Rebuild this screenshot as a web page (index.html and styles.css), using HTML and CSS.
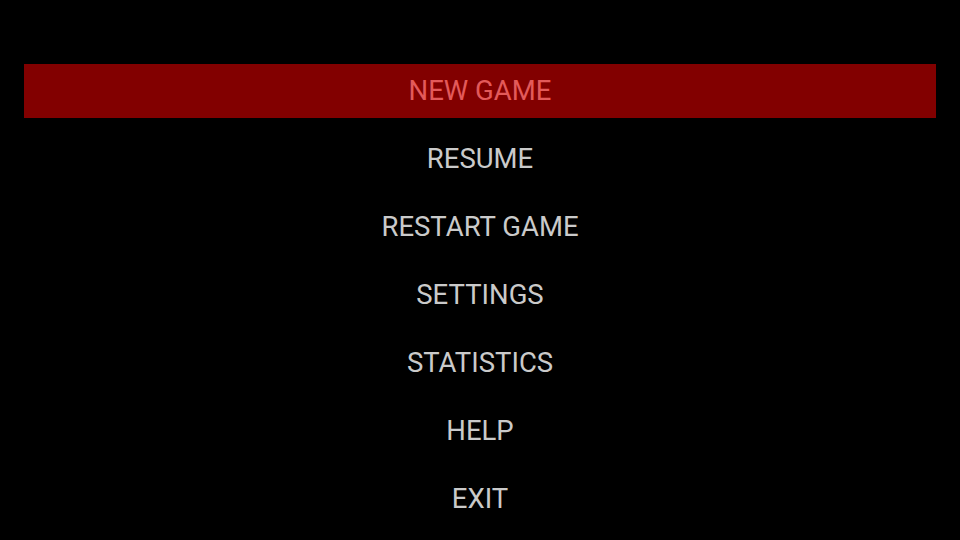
FILE: index.html
```html
<!DOCTYPE html>
<html lang="en">
<head>
    <meta charset="UTF-8">
    <title>Menu</title>
    <link rel="stylesheet" href="styles.css">
</head>
<body>
    <ul class="menu">
        <li class="menu-item active">NEW GAME</li>
        <li class="menu-item">RESUME</li>
        <li class="menu-item">RESTART GAME</li>
        <li class="menu-item">SETTINGS</li>
        <li class="menu-item">STATISTICS</li>
        <li class="menu-item">HELP</li>
        <li class="menu-item">EXIT</li>
    </ul>
</body>
</html>
```

FILE: styles.css
```css
body {
    margin: 0;
    background-color: #000;
    font-family: Roboto, "Liberation Sans", sans-serif;
    overflow: hidden;
}

.menu {
    list-style: none;
    margin: 0;
    padding: 64px 24px 0;
    display: flex;
    flex-direction: column;
    gap: 14px;
}

.menu-item {
    height: 54px;
    box-sizing: border-box;
    padding-bottom: 2px;
    display: flex;
    align-items: center;
    justify-content: center;
    font-size: 27.5px;
    color: #cacaca;
}

.menu-item.active {
    background-color: #820000;
    color: #e35a5a;
}
```
